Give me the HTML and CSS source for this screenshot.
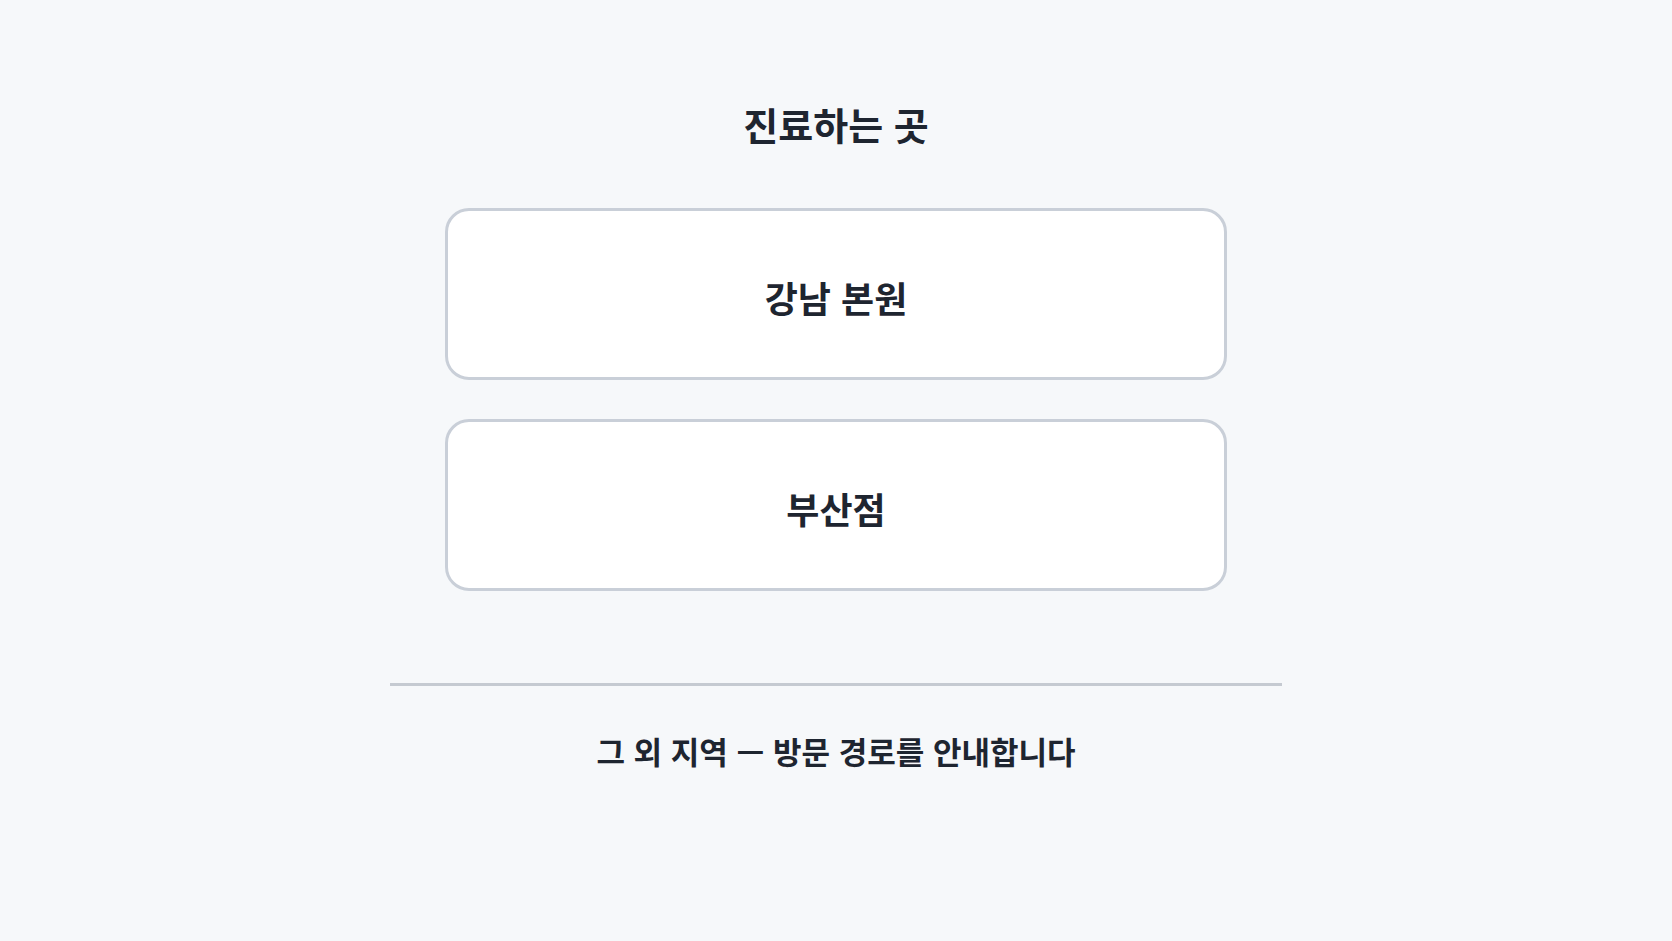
FILE: index.html
```html
<!DOCTYPE html>
<html lang="ko">
<head>
  <meta charset="UTF-8" />
  <meta name="viewport" content="width=device-width, initial-scale=1.0"/>
  <title>진료하는 곳</title>
  <link rel="stylesheet" href="styles.css">
</head>
<body>
  <main class="page">
    <h1 class="title">진료하는 곳</h1>

    <div class="branch-list">
      <button class="branch" type="button">강남 본원</button>
      <button class="branch" type="button">부산점</button>
    </div>

    <hr class="divider" />

    <p class="other">그 외 지역 — 방문 경로를 안내합니다</p>
  </main>
</body>
</html>
```

FILE: styles.css
```css
body {
  margin: 0;
  background: #f6f8fa;
  color: #1e2530;
  font-family: "Noto Sans CJK KR", "Noto Sans", sans-serif;
}

.page {
  width: 892px;
  margin: 0 auto;
  padding-top: 102px;
  display: flex;
  flex-direction: column;
  align-items: center;
}

.title {
  margin: 0;
  font-size: 38px;
  line-height: 44px;
  font-weight: 700;
}

.branch-list {
  margin-top: 62px;
  width: 782px;
  display: flex;
  flex-direction: column;
  gap: 39px;
}

.branch {
  box-sizing: border-box;
  height: 172px;
  padding: 5px 0 0;
  border: 3px solid #c9cfd8;
  border-radius: 24px;
  background: #fff;
  color: #1e2530;
  font-family: inherit;
  font-size: 36px;
  font-weight: 700;
  cursor: pointer;
}

.branch:hover {
  border-color: #aeb6c1;
}

.divider {
  width: 100%;
  margin: 92px 0 0;
  border: none;
  border-top: 3px solid #c5cad1;
}

.other {
  margin: 45px 0 0;
  font-size: 31px;
  line-height: 40px;
  font-weight: 700;
}
```
